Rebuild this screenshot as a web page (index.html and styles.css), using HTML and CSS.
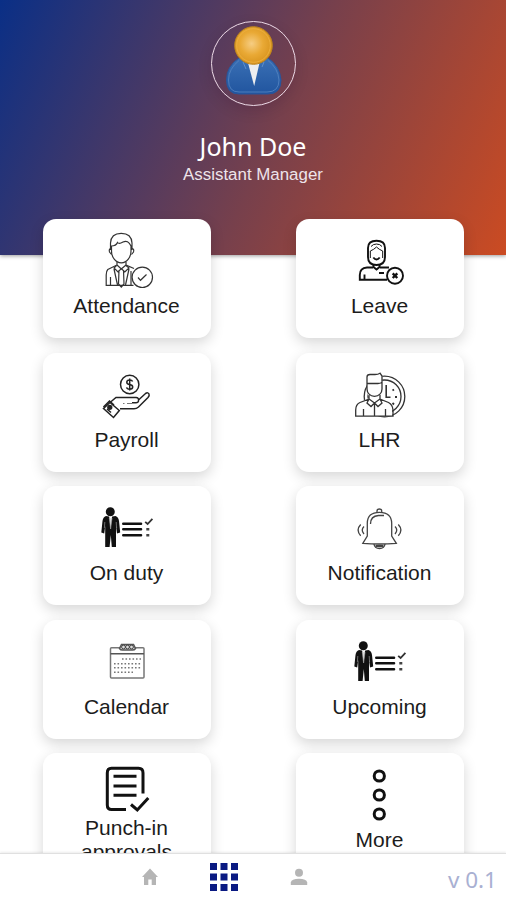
FILE: index.html
```html
<!DOCTYPE html>
<html lang="en">
<head>
    <meta charset="UTF-8">
    <meta name="viewport" content="width=device-width, initial-scale=1.0">
    <title>Dashboard</title>
    <link rel="stylesheet" href="styles.css">
</head>
<body>
    <!-- Worker with checklist, used by two cards -->
    <svg class="sprite">
        <symbol id="duty" viewBox="0 0 60 60">
            <circle cx="13.3" cy="13.7" r="4.5" fill="#111"/>
            <path d="M9 18L12 18.500L13.600 24L15.200 18.500L18.500 18Q21.500 19 22 23L23.200 34.500L20 35.500L19 28V49H14.800L13.800 37L12.600 49H8.200V28L7.200 35.500L4.300 34.500L5.500 23Q6 19 9 18Z" fill="#111"/>
            <path d="M12.300 20L13.600 31L15 20M7.800 24L7.400 30M19.200 24L19.600 30" fill="#ddd" stroke="#aaa" stroke-width=".6"/>
            <path d="M26.300 25.700H44M26.300 31.300H44M26.300 37.300H44" fill="none" stroke="#111" stroke-width="2.600" stroke-linecap="round"/>
            <path d="M48.200 23.800L50.600 26L55.400 20.800" fill="none" stroke="#333" stroke-width="1.800"/>
            <path d="M49.300 30H52.300V32.600H49.300ZM49.300 36H52.300V38.600H49.300Z" fill="#444"/>
        </symbol>
    </svg>

    <div class="screen">
        <header class="header">
            <div class="avatar">
                <svg width="82" height="82" viewBox="0 0 82 82">
                    <defs>
                        <radialGradient id="face" cx="0.45" cy="0.45" r="0.55">
                            <stop offset="0" stop-color="#f6cd83"/>
                            <stop offset="0.55" stop-color="#e9a935"/>
                            <stop offset="1" stop-color="#d9951f"/>
                        </radialGradient>
                        <linearGradient id="suit" x1="0" y1="0" x2="0" y2="1">
                            <stop offset="0" stop-color="#3a70b5"/>
                            <stop offset="1" stop-color="#21559f"/>
                        </linearGradient>
                    </defs>
                    <path d="M27 36Q14.500 44 14.500 58Q14.500 72 27 72H56Q69 72 69 58Q68 44 56 36Z" fill="url(#suit)" stroke="#28559b"/>
                    <path d="M27 38.500Q16.500 47 16.500 58Q16.500 70 27 70H55Q67 70 67 58Q66 46 56 38.500" fill="none" stroke="#5585c2" stroke-width=".8"/>
                    <path d="M36 41L42.200 64L47.500 41Z" fill="#eceef0"/>
                    <path d="M31 40L34 47M52 40L50 45" fill="none" stroke="#5f8fca"/>
                    <circle cx="41.500" cy="23.500" r="18.800" fill="url(#face)" stroke="#bd841d"/>
                    <circle cx="41.500" cy="23.500" r="16.800" fill="none" stroke="#edb243" stroke-width=".8"/>
                </svg>
            </div>
            <h1 class="name">John Doe</h1>
            <p class="role">Assistant Manager</p>
        </header>

        <main class="grid">
            <div class="card">
                <svg class="icon" viewBox="0 0 60 60" stroke="#333" stroke-width="1.200">
                    <path d="M13.500 19V12Q14 2.300 24.200 2.300Q34.500 2.300 35 12V19M14.500 15Q19 15 20.500 11.500Q22 13.500 26 11Q31 8.500 34 15V20C34 26 30 31.800 24.300 31.800C18.500 31.800 14.500 26 14.500 20Z"/>
                    <path d="M14.500 17.500Q11.500 17.500 12.500 21L14.500 23.500M34.500 17.500Q37.500 17.500 36.500 21L34.500 23.500"/>
                    <path d="M20 31V34L10.800 38.500Q9.200 40 9.200 44V54.300H36.500M29 31V34L37 37.500M20 34L24.300 38L29 34"/>
                    <path d="M19.500 34.500L17 37L21 41L24.300 37.500L27.800 41L32 37L29 34.500M22 39L21.500 53L24.300 56L27 53L26.500 39M17 38L20.500 54M32 38L28.500 54M13.500 46V54M34 40V54"/>
                    <circle cx="45.300" cy="46.300" r="10.200" fill="#fff"/>
                    <path d="M41 46.500L43.500 49.300L49.500 43.500"/>
                </svg>
                <span class="label">Attendance</span>
            </div>
            <div class="card">
                <svg class="icon" viewBox="0 0 60 60" stroke="#111" stroke-width="1.900">
                    <path d="M18 26V17Q18 9.800 26.500 9.800Q35 9.800 35 17V26Q35 34 26.500 34Q18 34 18 26Z"/>
                    <path d="M20.300 27V20Q24 18.500 26.500 16Q29 18.500 32.700 20V27M21 15.500Q23 13 26.500 13Q30 13 32 15.500" stroke-width="1"/>
                    <path d="M23.300 26.500Q26.500 30.500 29.700 26.500M23.500 33V36L26.500 38.500L29.500 36V33"/>
                    <path d="M23 36.500H17Q9.800 37 9.800 44V48.700H37M30 36.500H39M14.500 43.500V48M29 42H34"/>
                    <circle cx="45" cy="44.700" r="8" fill="#fff"/>
                    <path d="M42.700 42.400L47.300 47M47.300 42.400L42.700 47" stroke-width="2.400"/>
                </svg>
                <span class="label">Leave</span>
            </div>
            <div class="card">
                <svg class="icon" viewBox="0 0 60 60" stroke="#222" stroke-width="1.500">
                    <circle cx="32.700" cy="19.500" r="9.200"/>
                    <path d="M35.600 16.500Q35 15 32.700 15Q29.800 15 29.800 17.200Q29.800 19.100 32.700 19.500Q35.700 20 35.700 22Q35.700 24.200 32.700 24.200Q30 24.200 29.600 22.300M32.700 13.500V25.500"/>
                    <path d="M13 37.500L19 32.500H39Q42 32.500 41.500 36Q41.300 37.800 39 37.800H35M41.500 35L48.500 28.500Q51 27 52 29Q52.700 30.500 51 32.500L41.500 42Q39.500 43.800 37 43.800H23"/>
                    <path d="M13 37.500L22.300 45.500L16.500 52.500L6.500 43.500Z"/>
                    <path d="M6.500 42L12.500 36L17 40M10 44L14 47.500" stroke-width="1.600"/>
                    <circle cx="12.800" cy="42.300" r="1.900" fill="#222"/>
                    <path d="M26 38.500H27.500M30 38.500H35" stroke="#777" stroke-width="1"/>
                </svg>
                <span class="label">Payroll</span>
            </div>
            <div class="card">
                <svg class="icon" viewBox="0 0 60 60" stroke="#333" stroke-width="1.300">
                    <circle cx="34.500" cy="31.500" r="20.300"/>
                    <circle cx="34.500" cy="31.500" r="16.500"/>
                    <path d="M17 15V26Q17.500 31 20 32.500L5.700 39V51.200H42V39L29 33.500Q32.300 30 32.300 25V9Z" fill="#fff" stroke="none"/>
                    <path d="M36.200 20V32.300H40.500" stroke-width="1.600"/>
                    <path d="M42.500 25.500L44 24.500M45 32H47M42.500 38L44 39.500" stroke-width="1.800"/>
                    <path d="M17 19V12Q17 9.500 20 9.500H25Q28 9.500 30 8.200L32 11V19M17 18.500H28Q31 18.500 32 17M17 18V24C17 28 20 31.300 24.500 31.300C29 31.300 32 28 32 24V18"/>
                    <path d="M19 30V34L10 37.500Q5.700 39.500 5.700 45V51.200H43V45Q42.500 39.500 38.500 37.500L30 34V30M19 34L24.500 38L30 34M19 34L17 38L21 41.500L24.500 38L28 41.500L32 38L30 34M24.500 38V51M13.500 44V51M35.500 44V51"/>
                </svg>
                <span class="label">LHR</span>
            </div>
            <div class="card">
                <svg class="icon"><use href="#duty"/></svg>
                <span class="label">On duty</span>
            </div>
            <div class="card">
                <svg class="icon" viewBox="0 0 60 60" stroke="#444" stroke-width="1.300">
                    <path d="M27 14V13Q27 11 29.300 11Q31.700 11 31.700 13V14"/>
                    <path d="M12.800 45.300L17.300 38V25.500Q17.300 14.300 29.500 14.300Q41.700 14.300 41.700 25.500V38L46.300 45.300Q29.500 46.700 12.800 45.300Z"/>
                    <path d="M24 46Q24.500 50.500 29.500 50.500Q34.500 50.500 35 46M20.500 26Q20.500 18 28.500 17.500H34"/>
                    <path d="M25.500 48H33.500" stroke-width="2.400"/>
                    <path d="M10.700 26.500Q5.500 32 10.700 37.800M14 28.500Q10.500 32 14 36M48.300 26.500Q53.500 32 48.300 37.800M45 28.500Q48.500 32 45 36"/>
                </svg>
                <span class="label">Notification</span>
            </div>
            <div class="card">
                <svg class="icon" viewBox="0 0 60 60" stroke="#777" stroke-width="1.500">
                    <rect x="13.500" y="15.700" width="33.500" height="30.300" rx="1"/>
                    <path d="M13.500 21.700H47" stroke="#555"/>
                    <path d="M22.500 16.500L24.500 12.500H36.500L38.500 16.500Q37.500 18 35.500 18H25.500Q23.500 18 22.500 16.500Z" fill="#ddd" stroke="#555"/>
                    <g stroke="#444" stroke-width="1">
                        <circle cx="26.500" cy="15" r="1.900"/>
                        <circle cx="30.500" cy="15" r="1.900"/>
                        <circle cx="34.500" cy="15" r="1.900"/>
                    </g>
                    <path d="M25 27H44M17 31.700H44M17 35.700H44M17 40.300H36" stroke-dasharray="1.600 1.900"/>
                </svg>
                <span class="label">Calendar</span>
            </div>
            <div class="card">
                <svg class="icon"><use href="#duty"/></svg>
                <span class="label">Upcoming</span>
            </div>
            <div class="card">
                <svg class="icon" viewBox="0 0 60 60" stroke="#111" stroke-width="3">
                    <path d="M29 56.500H14.500Q10.300 56.500 10.300 52V20Q10.300 15.300 14.500 15.300H41.500Q46 15.300 46 20V40.500"/>
                    <path d="M16.500 23.200H39.500M16.500 33H39.500M16.500 42.300H39.500"/>
                    <path d="M34 51.500L40.300 57L51.300 45"/>
                </svg>
                <span class="label">Punch-in approvals</span>
            </div>
            <div class="card">
                <svg class="icon" viewBox="0 0 60 60" stroke="#111" stroke-width="3">
                    <circle cx="29.300" cy="11" r="5.100"/>
                    <circle cx="29.300" cy="30" r="5.100"/>
                    <circle cx="29.300" cy="49" r="5.100"/>
                </svg>
                <span class="label">More</span>
            </div>
        </main>
    </div>

    <nav class="nav">
        <a class="tab">
            <svg width="20" height="20" viewBox="0 0 20 20" fill="#b5b5b5"><path d="M10 1.500L18 10H16V18H11.700V12.500H8.300V18H4V10H2Z"/></svg>
        </a>
        <a class="tab">
            <svg width="28" height="28" viewBox="0 0 28 28" fill="#0a1a82">
                <path d="M0 0H7V7H0ZM10.500 0H17.500V7H10.500ZM21 0H28V7H21ZM0 10.500H7V17.500H0ZM10.500 10.500H17.500V17.500H10.500ZM21 10.500H28V17.500H21ZM0 21H7V28H0ZM10.500 21H17.500V28H10.500ZM21 21H28V28H21Z"/>
            </svg>
        </a>
        <a class="tab">
            <svg width="20" height="20" viewBox="0 0 20 20" fill="#b5b5b5"><circle cx="10" cy="5.700" r="4"/><path d="M1.800 18V15.500Q2.500 11.800 10 11.800Q17.500 11.800 18.200 15.500V18Z"/></svg>
        </a>
        <span class="version">v 0.1</span>
    </nav>
</body>
</html>
```
FILE: styles.css
```css
* {
    box-sizing: border-box;
}
body {
    margin: 0;
    height: 100vh;
    display: flex;
    flex-direction: column;
    background-color: #fff;
    color: #1c1c1c;
    font-family: "Liberation Sans", Arial, sans-serif;
    overflow: hidden;
}
.sprite {
    display: none;
}
.screen {
    flex: 1;
    min-height: 0;
    overflow: hidden;
}

/* Header */
.header {
    height: 255px;
    padding-top: 21px;
    display: flex;
    flex-direction: column;
    align-items: center;
    background: linear-gradient(115deg, #0a2f86 0%, #77404c 54%, #cb4b22 100%);
    box-shadow: 0 1px 4px rgba(0, 0, 0, 0.4);
    color: #fff;
}
.avatar {
    width: 85px;
    height: 85px;
    border: 1.500px solid #ecd9e6;
    border-radius: 50%;
    display: flex;
    justify-content: center;
    box-shadow: 0 5px 14px rgba(40, 10, 40, 0.15);
}
.name {
    margin: 23px 0 0;
    font-family: "Noto Sans", sans-serif;
    font-size: 25px;
    font-weight: 400;
    line-height: 34px;
}
.role {
    margin: 2px 0 0;
    font-size: 16.900px;
    line-height: 20px;
    color: #eee4ea;
}

/* Cards */
.grid {
    display: grid;
    grid-template-columns: 1fr 1fr;
    grid-auto-rows: 119px;
    row-gap: 14.600px;
    justify-items: center;
    margin-top: -36px;
}
.card {
    width: 168px;
    padding: 0 30px 8px;
    display: flex;
    flex-direction: column;
    align-items: center;
    justify-content: center;
    gap: 3px;
    background-color: #fff;
    border-radius: 13px;
    box-shadow: 0 5px 14px rgba(0, 0, 0, 0.16);
}
.icon {
    width: 60px;
    height: 60px;
    flex-shrink: 0;
    fill: none;
}
.label {
    font-size: 21px;
    line-height: 24px;
    text-align: center;
}

/* Bottom bar */
.nav {
    height: 47px;
    padding: 0 9px 0 112.500px;
    display: flex;
    align-items: center;
    background-color: #fff;
    border-top: 1px solid #e0e0e0;
    box-shadow: 0 -1px 2px rgba(0, 0, 0, 0.08);
    z-index: 1;
}
.tab {
    width: 74.500px;
    display: flex;
    justify-content: center;
}
.version {
    margin-left: auto;
    padding-top: 4px;
    font-family: "Noto Sans", sans-serif;
    font-size: 22.500px;
    color: #a9b0d2;
}
```
